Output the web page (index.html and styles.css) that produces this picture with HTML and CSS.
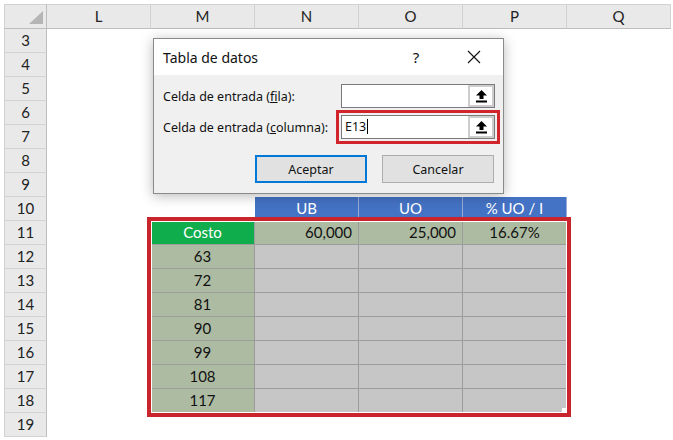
FILE: index.html
```html
<!DOCTYPE html>
<html lang="es">
<head>
    <meta charset="UTF-8">
    <title>Tabla de datos</title>
    <link rel="stylesheet" href="styles.css">
</head>
<body>
<div class="page">
    <div class="sheet">
        <div class="row head-row">
            <div class="num corner"><span class="tri"></span></div>
            <div class="col">L</div>
            <div class="col">M</div>
            <div class="col">N</div>
            <div class="col">O</div>
            <div class="col">P</div>
            <div class="col">Q</div>
        </div>
        <div class="row"><div class="num">3</div></div>
        <div class="row"><div class="num">4</div></div>
        <div class="row"><div class="num">5</div></div>
        <div class="row"><div class="num">6</div></div>
        <div class="row"><div class="num">7</div></div>
        <div class="row"><div class="num">8</div></div>
        <div class="row"><div class="num">9</div></div>
        <div class="row">
            <div class="num">10</div>
            <div class="cell"></div>
            <div class="cell"></div>
            <div class="cell blue">UB</div>
            <div class="cell blue">UO</div>
            <div class="cell blue">% UO / I</div>
        </div>
        <div class="row">
            <div class="num">11</div>
            <div class="cell"></div>
            <div class="cell green">Costo</div>
            <div class="cell sage right">60,000</div>
            <div class="cell sage right">25,000</div>
            <div class="cell sage">16.67%</div>
        </div>
        <div class="row">
            <div class="num">12</div>
            <div class="cell"></div>
            <div class="cell sage">63</div>
            <div class="cell gray"></div><div class="cell gray"></div><div class="cell gray"></div>
        </div>
        <div class="row">
            <div class="num">13</div>
            <div class="cell"></div>
            <div class="cell sage">72</div>
            <div class="cell gray"></div><div class="cell gray"></div><div class="cell gray"></div>
        </div>
        <div class="row">
            <div class="num">14</div>
            <div class="cell"></div>
            <div class="cell sage">81</div>
            <div class="cell gray"></div><div class="cell gray"></div><div class="cell gray"></div>
        </div>
        <div class="row">
            <div class="num">15</div>
            <div class="cell"></div>
            <div class="cell sage">90</div>
            <div class="cell gray"></div><div class="cell gray"></div><div class="cell gray"></div>
        </div>
        <div class="row">
            <div class="num">16</div>
            <div class="cell"></div>
            <div class="cell sage">99</div>
            <div class="cell gray"></div><div class="cell gray"></div><div class="cell gray"></div>
        </div>
        <div class="row">
            <div class="num">17</div>
            <div class="cell"></div>
            <div class="cell sage">108</div>
            <div class="cell gray"></div><div class="cell gray"></div><div class="cell gray"></div>
        </div>
        <div class="row">
            <div class="num">18</div>
            <div class="cell"></div>
            <div class="cell sage">117</div>
            <div class="cell gray"></div><div class="cell gray"></div><div class="cell gray"></div>
        </div>
        <div class="row"><div class="num">19</div></div>
    </div>

    <!-- selected range M11:P18 -->
    <div class="selection"><span class="handle"></span></div>

    <div class="dialog">
        <div class="title-bar">
            <span class="title">Tabla de datos</span>
            <span class="help">?</span>
            <span class="close">
                <svg width="14" height="14" viewBox="0 0 14 14"><path d="M1 1 L13 13 M13 1 L1 13" stroke="#111" stroke-width="1.1" fill="none"/></svg>
            </span>
        </div>
        <div class="dialog-body">
            <div class="field">
                <label>Celda de entrada (<u>f</u>ila):</label>
                <div class="input">
                    <span class="value"></span>
                    <span class="pick">
                        <svg width="11" height="13" viewBox="0 0 11 13"><path d="M5.5 0 L11 5.5 L7.5 5.5 L7.5 9 L3.5 9 L3.5 5.5 L0 5.5 Z" fill="#000"/><rect x="0" y="10.5" width="11" height="2" fill="#000"/></svg>
                    </span>
                </div>
            </div>
            <div class="field">
                <label>Celda de entrada (<u>c</u>olumna):</label>
                <div class="mark">
                    <div class="input">
                        <span class="value">E13<span class="caret"></span></span>
                        <span class="pick">
                            <svg width="11" height="13" viewBox="0 0 11 13"><path d="M5.5 0 L11 5.5 L7.5 5.5 L7.5 9 L3.5 9 L3.5 5.5 L0 5.5 Z" fill="#000"/><rect x="0" y="10.5" width="11" height="2" fill="#000"/></svg>
                        </span>
                    </div>
                </div>
            </div>
            <div class="buttons">
                <button class="btn default">Aceptar</button>
                <button class="btn">Cancelar</button>
            </div>
        </div>
    </div>
</div>
</body>
</html>
```

FILE: styles.css
```css
:root {
    --head-bg: #e9e9e9;
    --head-line: #d2d2d2;
    --head-edge: #bdbdbd;
    --grid: #9c9c9c;
    --blue: #4472c4;
    --green: #10ad4c;
    --sage: #adbba2;
    --gray: #c6c6c6;
    --red: #c8262c;
}

body {
    margin: 0;
    background: #ffffff;
    font-family: "Lato", "Liberation Sans", sans-serif;
    color: #111;
}

.page {
    position: relative;
    width: 673px;
    height: 440px;
    overflow: hidden;
}

.sheet {
    padding: 4px 0 0 4px;
}

.row {
    display: flex;
    height: 24px;
}

.head-row {
    height: 25px;
}

.num {
    box-sizing: border-box;
    width: 43px;
    flex: none;
    background: var(--head-bg);
    border-left: 1px solid var(--head-line);
    border-right: 1px solid var(--head-edge);
    border-bottom: 1px solid var(--head-line);
    font-size: 15px;
    text-align: center;
    line-height: 23px;
    color: #222;
}

.corner {
    position: relative;
    border-top: 1px solid var(--head-line);
    border-bottom: 1px solid var(--head-edge);
}

.tri {
    position: absolute;
    right: 3px;
    bottom: 4px;
    width: 0;
    height: 0;
    border-left: 14px solid transparent;
    border-bottom: 13px solid #b5b5b5;
}

.col {
    box-sizing: border-box;
    width: 104px;
    flex: none;
    background: var(--head-bg);
    border-top: 1px solid var(--head-line);
    border-right: 1px solid var(--head-line);
    border-bottom: 1px solid var(--head-edge);
    font-size: 15px;
    text-align: center;
    line-height: 23px;
    color: #222;
}

.cell {
    box-sizing: border-box;
    width: 104px;
    flex: none;
    font-size: 15px;
    line-height: 23px;
    text-align: center;
    color: #111;
}

.blue {
    background: var(--blue);
    color: #fff;
    border-right: 1px solid #97acd9;
}

.green {
    background: var(--green);
    color: #fff;
    border-right: 1px solid var(--grid);
    border-bottom: 1px solid var(--grid);
}

.sage {
    background: var(--sage);
    border-right: 1px solid var(--grid);
    border-bottom: 1px solid var(--grid);
}

.gray {
    background: var(--gray);
    border-right: 1px solid var(--grid);
    border-bottom: 1px solid var(--grid);
}

.right {
    text-align: right;
    padding-right: 6px;
}

.selection {
    position: absolute;
    left: 147px;
    top: 217px;
    width: 424px;
    height: 200px;
    box-sizing: border-box;
    border: 4px solid var(--red);
    box-shadow: inset 0 0 0 1px #fff;
}

.handle {
    position: absolute;
    right: 1px;
    bottom: 1px;
    width: 4px;
    height: 4px;
    background: #fff;
}

/* dialog */
.dialog {
    position: absolute;
    left: 153px;
    top: 38px;
    width: 351px;
    height: 156px;
    box-sizing: border-box;
    border: 1px solid #8a8a8a;
    background: #f0f0f0;
    box-shadow: 0 2px 12px rgba(0, 0, 0, 0.28);
    font-family: "Noto Sans", "Open Sans", sans-serif;
    font-size: 12.5px;
    color: #111;
}

.title-bar {
    display: flex;
    align-items: center;
    height: 36px;
    background: #ffffff;
    padding-left: 9px;
}

.title {
    flex: 1;
    font-size: 14px;
}

.help {
    width: 30px;
    text-align: center;
    font-size: 15px;
    margin-right: 20px;
}

.close {
    width: 46px;
    height: 36px;
    margin-right: 6px;
    display: flex;
    align-items: center;
    justify-content: center;
}

.dialog-body {
    padding: 9px 8px 0 9px;
}

.field {
    display: flex;
    align-items: center;
    justify-content: space-between;
    height: 24px;
    margin-bottom: 7px;
}

.input {
    box-sizing: border-box;
    display: flex;
    width: 154px;
    height: 24px;
    background: #fff;
    border: 1px solid #7a7a7a;
}

.value {
    flex: 1;
    padding-left: 3px;
    line-height: 22px;
    font-size: 12.5px;
}

.caret {
    display: inline-block;
    width: 1px;
    height: 15px;
    background: #000;
    vertical-align: -3px;
    margin-left: 1px;
}

.pick {
    box-sizing: border-box;
    width: 26px;
    height: 22px;
    border: 2px solid #cdcdcd;
    display: flex;
    align-items: center;
    justify-content: center;
    background: #fff;
}

.mark {
    border: 3px solid #d1242b;
    padding: 2px;
    margin: -5px;
}

.buttons {
    display: flex;
    justify-content: flex-end;
    gap: 15px;
    margin-top: 16px;
    padding-right: 1px;
}

.btn {
    box-sizing: border-box;
    width: 112px;
    height: 28px;
    background: #e1e1e1;
    border: 1px solid #adadad;
    font-family: "Noto Sans", "Open Sans", sans-serif;
    font-size: 12.5px;
    color: #111;
    padding: 0;
}

.btn.default {
    border: 2px solid #0078d7;
}
```
